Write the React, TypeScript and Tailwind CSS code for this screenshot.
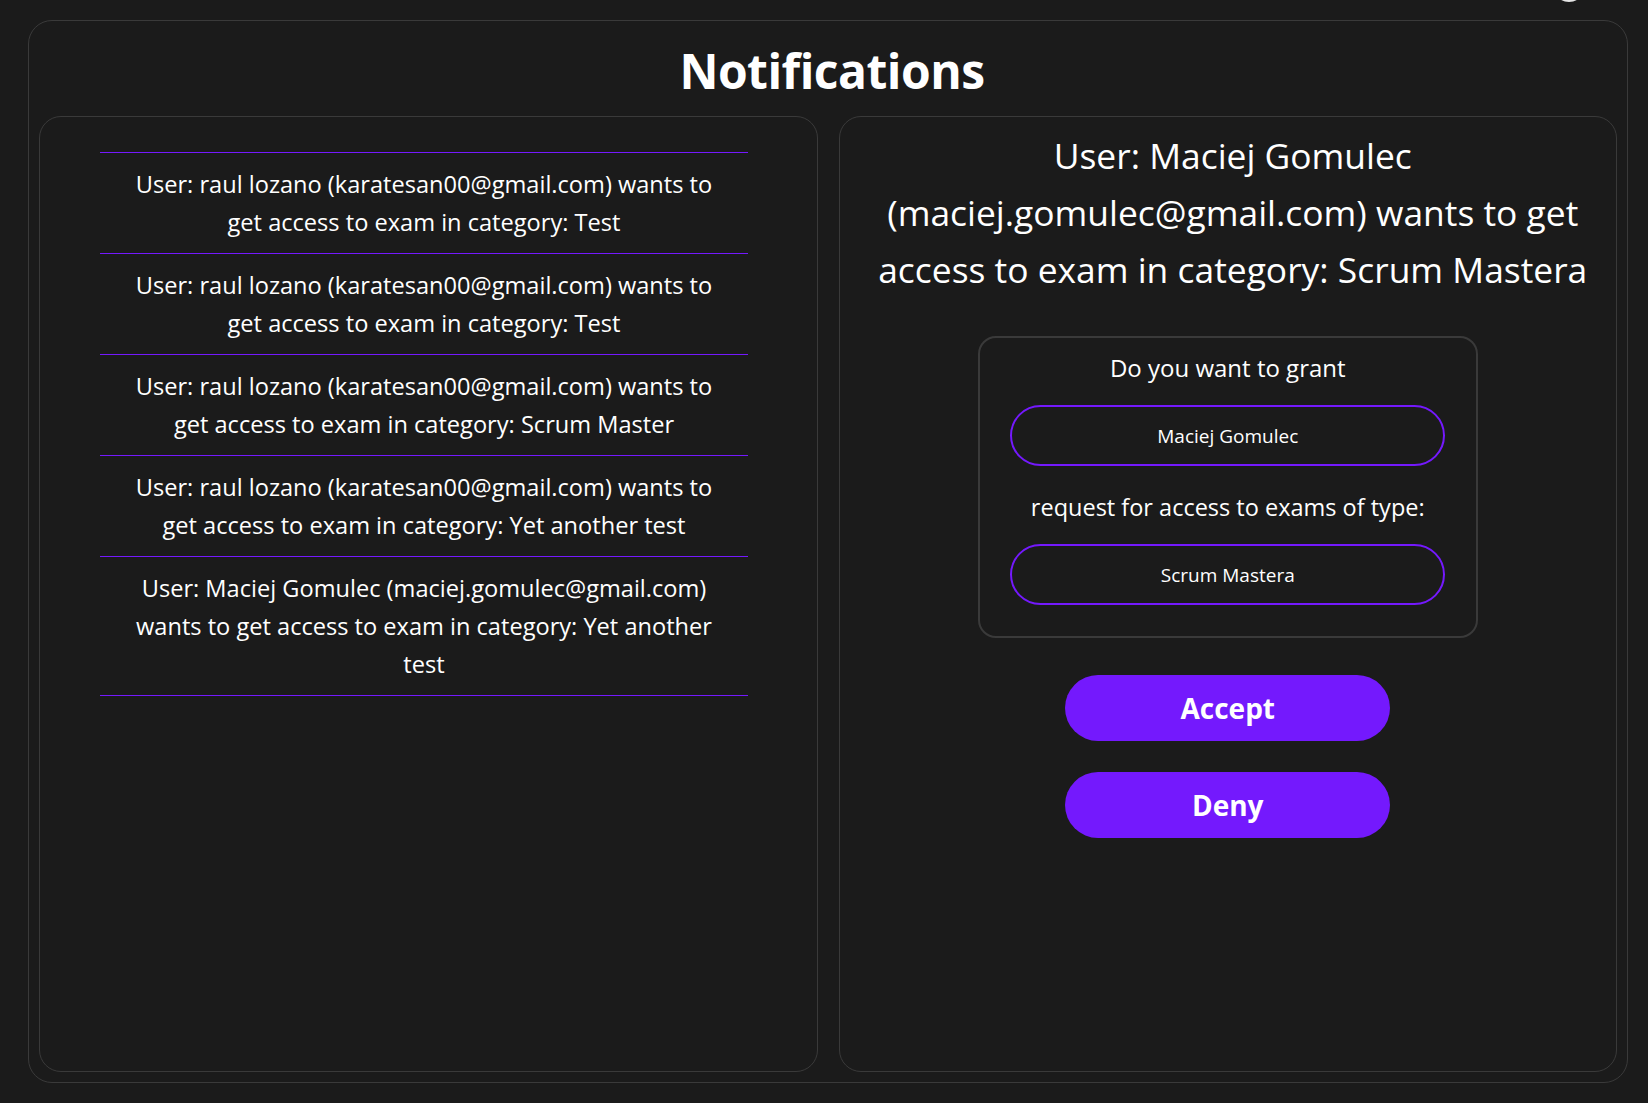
import React from 'react';

const requests = [
  'User: raul lozano (karatesan00@gmail.com) wants to get access to exam in category: Test',
  'User: raul lozano (karatesan00@gmail.com) wants to get access to exam in category: Test',
  'User: raul lozano (karatesan00@gmail.com) wants to get access to exam in category: Scrum Master',
  'User: raul lozano (karatesan00@gmail.com) wants to get access to exam in category: Yet another test',
  'User: Maciej Gomulec (maciej.gomulec@gmail.com) wants to get access to exam in category: Yet another test',
];

export default function App() {
  return (
    <div
      className="relative min-h-screen overflow-hidden bg-[#1b1b1b] pt-[20px] text-white"
      style={{ fontFamily: '"Open Sans", "Noto Sans", sans-serif' }}
    >
      {/* avatar peeking in from the top bar */}
      <div className="absolute left-[1553px] top-[-30px] h-[32px] w-[32px] rounded-full bg-[#e5e5e5]" />

      <div className="ml-[28px] flex h-[1063px] w-[1600px] flex-col rounded-[24px] border border-[#3a3a3a] px-[10px] pb-[10px]">
        <h1 className="flex h-[95px] items-center justify-center pl-[8px] pt-[4px] text-[48px] font-bold tracking-[-0.5px]">
          Notifications
        </h1>

        <div className="grid flex-1 grid-cols-2 gap-[21px]">
          {/* List */}
          <div className="rounded-[22px] border border-[#3a3a3a] pt-[35px]">
            <ul className="ml-[60px] w-[648px] border-t border-[#7419fd]">
              {requests.map((text, i) => (
                <li
                  key={i}
                  className="border-b border-[#7419fd] px-[24px] py-[12px] text-center text-[23.6px] leading-[38px]"
                >
                  {text}
                </li>
              ))}
            </ul>
          </div>

          {/* Detail */}
          <div className="flex flex-col items-center rounded-[22px] border border-[#3a3a3a] px-[20px] pt-[10px]">
            <h2 className="pl-[10px] text-center text-[35.4px] leading-[57px]">
              User: Maciej Gomulec (maciej.gomulec@gmail.com) wants to get access to exam in category: Scrum Mastera
            </h2>

            <div className="mt-[38px] flex w-[500px] flex-col items-center rounded-[18px] border-2 border-[#3a3a3a] pb-[31px] pt-[12px]">
              <p className="text-[24px] leading-[36px]">Do you want to grant</p>
              <div className="mt-[19px] flex h-[61px] w-[435px] items-center justify-center rounded-full border-2 border-[#7419fd] pt-[2px] text-[19px]">
                Maciej Gomulec
              </div>
              <p className="mt-[23px] text-[23.5px] leading-[36px]">request for access to exams of type:</p>
              <div className="mt-[19px] flex h-[61px] w-[435px] items-center justify-center rounded-full border-2 border-[#7419fd] pt-[2px] text-[19px]">
                Scrum Mastera
              </div>
            </div>

            <button className="mt-[37px] h-[66px] w-[325px] rounded-full bg-[#7419fd] text-[28px] font-bold">
              Accept
            </button>
            <button className="mt-[31px] h-[66px] w-[325px] rounded-full bg-[#7419fd] text-[28px] font-bold">
              Deny
            </button>
          </div>
        </div>
      </div>
    </div>
  );
}
